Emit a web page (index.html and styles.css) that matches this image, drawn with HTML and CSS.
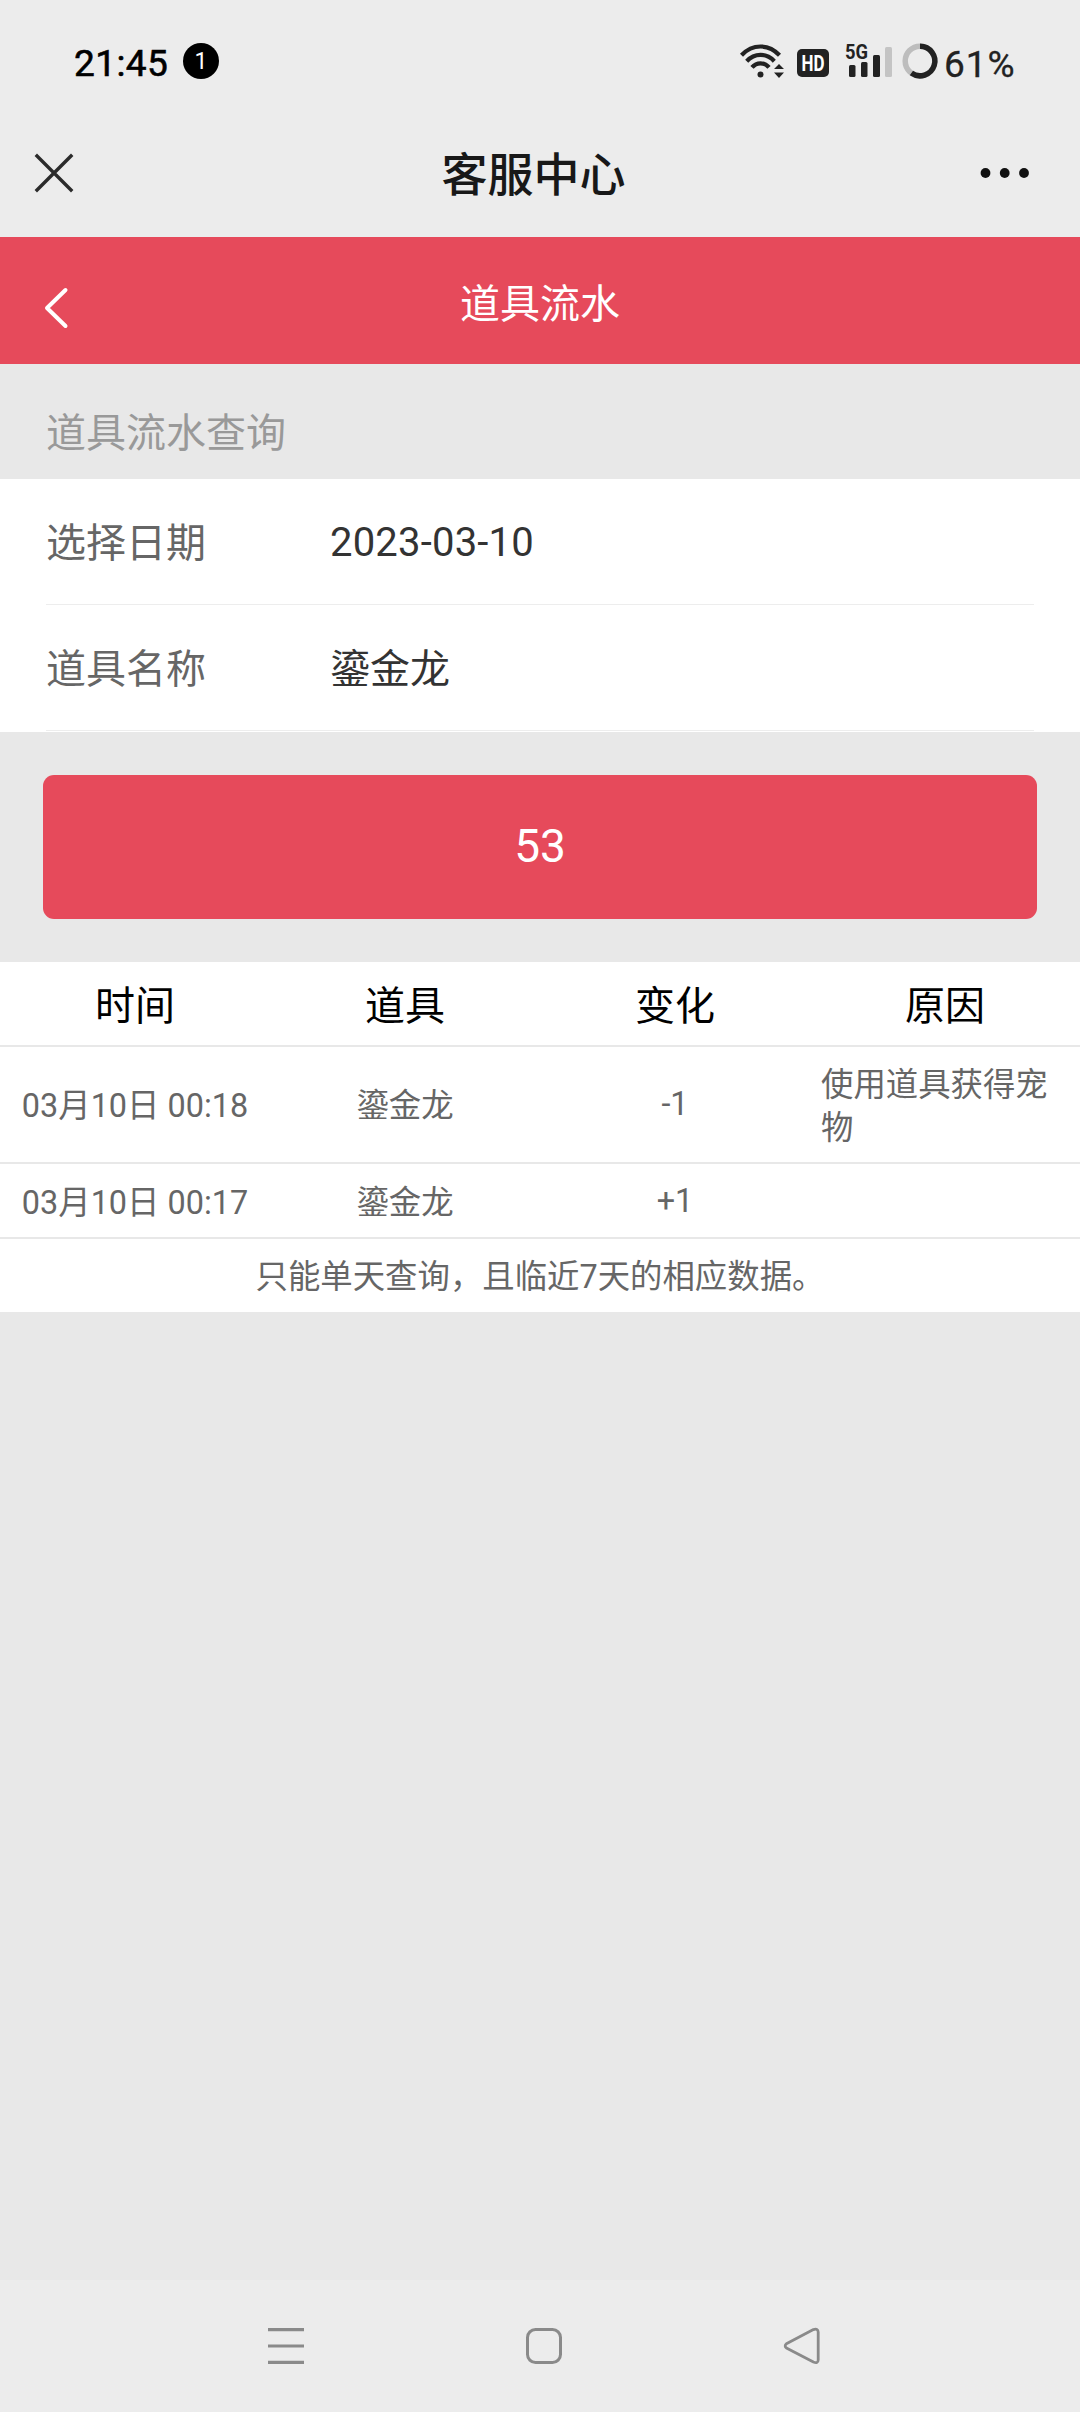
FILE: index.html
```html
<!DOCTYPE html>
<html lang="zh-CN">
<head>
<meta charset="utf-8">
<title>客服中心</title>
<link rel="stylesheet" href="styles.css">
</head>
<body>
<div class="status">
  <span class="clock">21:45</span>
  <span class="badge">1</span>
  <div class="indicators">
    <svg class="wifi" width="44" height="36" viewBox="0 0 44 36" fill="none" stroke="#222" stroke-width="4.2">
      <path d="M1.5 12.2C12.5 .6 28.5 .6 39.5 12.2"/>
      <path d="M6.7 18.2C14.5 9.8 26.5 9.8 34.3 18.2"/>
      <path d="M12 24.4C16.6 18.9 24.4 18.9 29 24.4"/>
      <circle cx="20.5" cy="31.6" r="3" fill="#222" stroke="none"/>
      <path d="M34 26L39 21l5 5zM34 29.5h10L39 35z" fill="#222" stroke="none"/>
    </svg>
    <svg class="hd" width="32" height="28" viewBox="0 0 32 28">
      <rect width="32" height="28" rx="5" fill="#222"/>
      <text x="16" y="21.5" textLength="23" lengthAdjust="spacingAndGlyphs" text-anchor="middle">HD</text>
    </svg>
    <svg class="signal" width="48" height="34" viewBox="0 0 48 34" fill="#222">
      <text x="0" y="15" textLength="23" lengthAdjust="spacingAndGlyphs">5G</text>
      <rect x="4" y="21" width="6.5" height="12" rx="1.5"/>
      <rect x="16" y="18" width="6.5" height="15" rx="1.5"/>
      <rect x="28" y="11" width="7" height="22" rx="1.5"/>
      <rect x="40" y="3" width="7" height="30" rx="1.5" fill="#c4c4c4"/>
    </svg>
    <svg class="ring" width="36" height="36" viewBox="0 0 36 36" fill="none" stroke-width="5.5">
      <circle cx="18" cy="18" r="14.8" stroke="#bdbdbd"/>
      <path d="M18 3.2A14.8 14.8 0 1 1 9.4 30" stroke="#222"/>
    </svg>
    <span class="percent">61%</span>
  </div>
</div>
<header class="appbar">
  <svg width="38" height="38" viewBox="0 0 38 38" stroke="#2b2b2b" stroke-width="3.4" stroke-linecap="square"><path d="M2 2l34 34M36 2L2 36"/></svg>
  <h1>客服中心</h1>
  <svg width="50" height="12" viewBox="0 0 50 12" fill="#111"><circle cx="5.5" cy="6" r="4.9"/><circle cx="24.7" cy="6" r="4.9"/><circle cx="44" cy="6" r="4.9"/></svg>
</header>
<div class="pagebar">
  <svg width="26" height="44" viewBox="0 0 26 44" fill="none" stroke="#fff" stroke-width="4" stroke-linecap="round" stroke-linejoin="round"><path d="M22.500 4L4 22L22.500 40"/></svg>
  <h2>道具流水</h2>
</div>
<main>
  <div class="caption">道具流水查询</div>
  <div class="form">
    <div class="field"><span class="label">选择日期</span><span class="value date">2023-03-10</span></div>
    <div class="field"><span class="label">道具名称</span><span class="value">鎏金龙</span></div>
  </div>
  <button class="submit">53</button>
  <div class="records">
    <div class="row head"><span>时间</span><span>道具</span><span>变化</span><span>原因</span></div>
    <div class="row first"><span>03月10日 00:18</span><span>鎏金龙</span><span class="delta">-1</span><span class="reason">使用道具获得宠物</span></div>
    <div class="row second"><span>03月10日 00:17</span><span>鎏金龙</span><span class="delta">+1</span><span></span></div>
    <div class="note">只能单天查询，且临近7天的相应数据。</div>
  </div>
</main>
<nav>
  <svg width="38" height="38" viewBox="0 0 38 38" stroke="#8a8a8a" stroke-width="3.2"><path d="M1 2.600h36M1 19h36M1 35.400h36"/></svg>
  <svg width="38" height="38" viewBox="0 0 38 38" fill="none" stroke="#8a8a8a" stroke-width="3"><rect x="2.500" y="2.500" width="33" height="33" rx="8"/></svg>
  <svg width="38" height="38" viewBox="0 0 38 38" fill="none" stroke="#8a8a8a" stroke-width="2.800" stroke-linejoin="round"><path d="M3.400 16.800L30.400 2.600Q35 1 35.200 5V33Q35 37 30.400 35L3.400 21Q1 19 3.400 16.800z"/></svg>
</nav>
</body>
</html>
```
FILE: styles.css
```css
* { box-sizing: border-box; }

body {
  margin: 0;
  width: 1080px;
  height: 2412px;
  display: flex;
  flex-direction: column;
  overflow: hidden;
  background: #ececec;
  color: #000;
  font-family: Roboto, "Noto Sans CJK SC", sans-serif;
}

h1, h2 { margin: 0; }
svg { display: block; flex: none; overflow: visible; }

.status {
  height: 122px;
  padding: 0 64px 0 74px;
  display: flex;
  align-items: center;
}
.clock {
  width: 109px;
  padding-top: 5px;
  font-size: 37px;
  line-height: 44px;
  letter-spacing: .4px;
  -webkit-text-stroke: .6px #000;
}
.badge {
  width: 36px;
  height: 36px;
  border-radius: 50%;
  background: #000;
  color: #fff;
  font-size: 23px;
  line-height: 37px;
  text-align: center;
}
.indicators { margin-left: auto; display: flex; align-items: center; color: #222; }
.wifi { margin-right: 13px; }
.hd { margin: 4px 16px 0 0; }
.hd text { fill: #fff; font-size: 22px; font-weight: 700; }
.signal { margin-right: 9px; }
.signal text { font-size: 20px; font-weight: 700; }
.percent {
  width: 72px;
  margin-left: 6px;
  padding-top: 8px;
  font-size: 37px;
  line-height: 44px;
  letter-spacing: 1px;
  -webkit-text-stroke: .3px #222;
}

.appbar {
  height: 115px;
  padding: 0 50px 14px 35px;
  display: grid;
  grid-template-columns: 50px 1fr 50px;
  align-items: center;
}
.appbar h1 { padding: 4px 0 0 2px; font-size: 46px; line-height: 60px; font-weight: 500; color: #181818; text-align: center; }

.pagebar {
  height: 127px;
  padding: 0 43px;
  display: grid;
  grid-template-columns: 26px 1fr 26px;
  align-items: center;
  background: #e64a5b;
  color: #fff;
}
.pagebar svg { margin-top: 15px; }
.pagebar h2 { padding-top: 9px; font-size: 40px; line-height: 48px; font-weight: 400; text-align: center; }

main { flex: 1; background: #e8e8e8; }
.caption { height: 115px; padding: 46px 46px 0; font-size: 40px; line-height: 48px; color: #999; }

.form { height: 253px; padding: 0 46px; background: #fff; }
.field { height: 126px; padding-top: 4px; display: flex; align-items: center; border-bottom: 1px solid #ededed; font-size: 40px; line-height: 48px; }
.label { width: 284px; color: #666; }
.value { color: #333; }
.date { padding-bottom: 2px; letter-spacing: .2px; }

.submit {
  display: block;
  width: 994px;
  height: 144px;
  margin: 43px;
  padding: 0 0 2px;
  border: 0;
  border-radius: 11px;
  background: #e64a5b;
  color: #fff;
  font: 46px/54px Roboto, sans-serif;
}

.records { background: #fff; font-size: 32.4px; line-height: 43px; color: #666; }
.row {
  display: grid;
  grid-template-columns: repeat(4, 270px);
  align-items: center;
  border-bottom: 2px solid #e8e8e8;
  text-align: center;
}
.head { height: 85px; padding-top: 5px; font-size: 40px; color: #000; }
.first { height: 117px; padding-top: 4px; }
.second { height: 75px; padding-top: 5px; }
.row .delta { padding-bottom: 4px; }
.row .reason { padding: 0 20px 0 11px; text-align: left; }
.note { height: 73px; padding-top: 17px; text-align: center; }

nav {
  height: 132px;
  padding: 0 259px 0 267px;
  display: flex;
  align-items: center;
  justify-content: space-between;
  background: #ececec;
}
```
